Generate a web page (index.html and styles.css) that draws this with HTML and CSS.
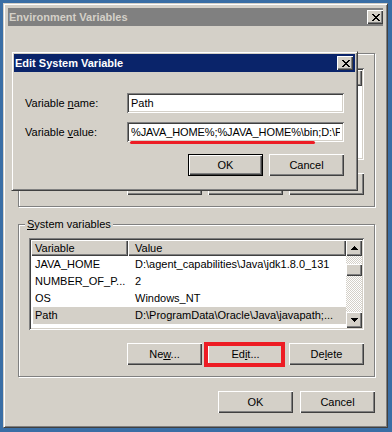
FILE: index.html
```html
<!DOCTYPE html>
<html lang="en">
<head>
    <meta charset="UTF-8">
    <title>Environment Variables</title>
    <link rel="stylesheet" href="styles.css">
</head>
<body>

<div class="window">
    <div class="titlebar inactive">
        <span class="caption">Environment Variables</span>
        <span class="close-btn">
            <svg width="8" height="7" viewBox="0 0 8 7"><path d="M0 0h2v1H0zM6 0h2v1H6zM1 1h2v1H1zM5 1h2v1H5zM2 2h4v1H2zM3 3h2v1H3zM2 4h4v1H2zM1 5h2v1H1zM5 5h2v1H5zM0 6h2v1H0zM6 6h2v1H6z"/></svg>
        </span>
    </div>

    <!-- User variables: covered by the edit dialog, only its edges show -->
    <div class="group user">
        <div class="listview">
            <div class="list-main">
                <div class="list-header"><span class="hd c1"></span><span class="hd c2"></span></div>
            </div>
        </div>
        <div class="button-row">
            <span class="btn"></span>
            <span class="btn"></span>
            <span class="btn"></span>
        </div>
    </div>

    <!-- System variables -->
    <fieldset class="group system">
        <legend><u>S</u>ystem variables</legend>
        <div class="listview">
            <div class="list-main">
                <div class="list-header"><span class="hd c1">Variable</span><span class="hd c2">Value</span></div>
                <div class="row"><span class="c1">JAVA_HOME</span><span class="c2">D:\agent_capabilities\Java\jdk1.8.0_131</span></div>
                <div class="row"><span class="c1">NUMBER_OF_P...</span><span class="c2">2</span></div>
                <div class="row"><span class="c1">OS</span><span class="c2">Windows_NT</span></div>
                <div class="row sel"><span class="c1">Path</span><span class="c2">D:\ProgramData\Oracle\Java\javapath;...</span></div>
            </div>
            <div class="scrollbar">
                <span class="sb-btn">
                    <svg width="7" height="4" viewBox="0 0 7 4"><path d="M3 0h1v1H3zM2 1h3v1H2zM1 2h5v1H1zM0 3h7v1H0z"/></svg>
                </span>
                <span class="sb-thumb"></span>
                <span class="sb-btn down">
                    <svg width="7" height="4" viewBox="0 0 7 4"><path d="M0 0h7v1H0zM1 1h5v1H1zM2 2h3v1H2zM3 3h1v1H3z"/></svg>
                </span>
            </div>
        </div>
        <div class="button-row">
            <button class="btn">Ne<u>w</u>...</button>
            <button class="btn marked">Ed<u>i</u>t...</button>
            <button class="btn">De<u>l</u>ete</button>
        </div>
    </fieldset>

    <div class="footer">
        <button class="btn">OK</button>
        <button class="btn">Cancel</button>
    </div>
</div>

<!-- Edit System Variable dialog, on top of the main window -->
<div class="dialog">
    <div class="titlebar active">
        <span class="caption">Edit System Variable</span>
        <span class="close-btn">
            <svg width="8" height="7" viewBox="0 0 8 7"><path d="M0 0h2v1H0zM6 0h2v1H6zM1 1h2v1H1zM5 1h2v1H5zM2 2h4v1H2zM3 3h2v1H3zM2 4h4v1H2zM1 5h2v1H1zM5 5h2v1H5zM0 6h2v1H0zM6 6h2v1H6z"/></svg>
        </span>
    </div>
    <div class="dialog-body">
        <div class="field">
            <label class="field-label">Variable <u>n</u>ame:</label>
            <input class="textbox" type="text" value="Path">
        </div>
        <div class="field">
            <label class="field-label">Variable <u>v</u>alue:</label>
            <div class="value-wrap">
                <input class="textbox long" type="text" value="%JAVA_HOME%;%JAVA_HOME%\bin;D:\ProgramData\Oracle\Java\javapath;C:\WINDOWS\system32">
                <span class="mark"></span>
            </div>
        </div>
        <div class="dialog-buttons">
            <button class="btn default">OK</button>
            <button class="btn">Cancel</button>
        </div>
    </div>
</div>

</body>
</html>
```

FILE: styles.css
```css
* {
    box-sizing: border-box;
}
body {
    margin: 0;
    background: #3a6ea5;
    font: 11px/13px "Liberation Sans", Arial, sans-serif;
    color: #000;
    overflow: hidden;
}
u {
    text-decoration-thickness: 1px;
    text-underline-offset: 1px;
}

/* window frames */
.window, .dialog {
    background: #d4d0c8;
    border: 1px solid;
    border-color: #d4d0c8 #404040 #404040 #d4d0c8;
    box-shadow: inset 1px 1px #fff, inset -1px -1px #808080;
}
.window {
    margin: 3px 0 0 3px;
    width: 385px;
    height: 425px;
    padding: 4px;
}
.dialog {
    position: absolute;
    left: 11px;
    top: 51px;
    width: 347px;
    height: 140px;
    padding: 2px;
}
.titlebar {
    display: flex;
    align-items: center;
    height: 18px;
    padding-left: 1px;
    font-weight: bold;
}
.titlebar.inactive {
    background: #808080;
    color: #d4d0c8;
}
.titlebar.active {
    background: #0a246a;
    color: #fff;
}
.close-btn {
    margin-left: auto;
    width: 16px;
    height: 14px;
    display: flex;
    align-items: center;
    justify-content: center;
    padding-left: 1px;
    background: #d4d0c8;
    box-shadow: inset 1px 1px #fff, inset -1px -1px #404040, inset -2px -2px #808080;
}
.dialog .close-btn {
    margin-right: 2px;
}
svg {
    display: block;
    fill: #000;
    shape-rendering: crispEdges;
}

/* group boxes */
.group {
    margin: 0 0 0 10px;
    width: 357px;
    min-width: 0;
    padding: 7px 10px 11px 10px;
    border: 1px solid #808080;
    box-shadow: inset 1px 1px #fff, 1px 1px #fff;
}
.group.user {
    margin-top: 27px;
    padding-top: 14px;
}
.group.system {
    margin-top: 11px;
}
.group legend {
    margin-left: -4px;
    padding: 0 2px;
    background: #d4d0c8;
    line-height: 13px;
}

/* list views */
.listview {
    display: flex;
    width: 335px;
    height: 92px;
    padding: 2px;
    background: #fff;
    box-shadow: inset 1px 1px #808080, inset -1px -1px #fff, inset 2px 2px #404040, inset -2px -2px #d4d0c8;
}
.list-main {
    flex: 1;
    min-width: 0;
    overflow: hidden;
}
.list-header {
    display: flex;
    height: 16px;
}
.hd {
    background: #d4d0c8;
    line-height: 16px;
    box-shadow: inset 1px 1px #fff, inset -1px -1px #404040, inset -2px -2px #808080;
}
.hd.c1 {
    width: 97px;
    padding-left: 4px;
}
.hd.c2 {
    flex: 1;
    padding-left: 7px;
}
.row {
    display: flex;
    height: 17px;
    line-height: 17px;
    margin-left: 2px;
    white-space: nowrap;
}
.row.sel {
    background: #d4d0c8;
}
.row .c1 {
    width: 95px;
    padding-left: 2px;
    overflow: hidden;
}
.row .c2 {
    flex: 1;
    padding-left: 7px;
    overflow: hidden;
}
.scrollbar {
    width: 16px;
    display: flex;
    flex-direction: column;
    background: repeating-conic-gradient(#fff 0 25%, #d4d0c8 0 50%) 0 0 / 2px 2px;
}
.sb-btn, .sb-thumb {
    background: #d4d0c8;
    box-shadow: inset 1px 1px #fff, inset -1px -1px #404040, inset -2px -2px #808080;
}
.sb-btn {
    height: 16px;
    display: flex;
    align-items: center;
    justify-content: center;
    padding-bottom: 1px;
}
.sb-btn.down {
    margin-top: auto;
}
.sb-thumb {
    height: 12px;
    margin-top: 8px;
}

/* buttons */
.btn {
    appearance: none;
    display: block;
    width: 75px;
    height: 22px;
    padding: 0;
    border: 0;
    background: #d4d0c8;
    font: inherit;
    color: #000;
    box-shadow: inset 1px 1px #fff, inset -1px -1px #404040, inset -2px -2px #808080;
}
.btn.default {
    box-shadow: inset 0 0 0 1px #000, inset 2px 2px #fff, inset -2px -2px #404040, inset -3px -3px #808080;
}
.btn.marked {
    position: relative;
}
.btn.marked::after {
    content: "";
    position: absolute;
    left: -4px;
    top: -1px;
    right: -2px;
    bottom: -2px;
    border: 4px solid #ed1c24;
}
.button-row {
    display: flex;
    justify-content: flex-end;
    gap: 6px;
    margin-top: 13px;
}
.footer {
    display: flex;
    justify-content: flex-end;
    gap: 7px;
    width: 357px;
    margin: 14px 0 0 10px;
}

/* edit dialog body */
.dialog-body {
    padding: 21px 11px 0 11px;
}
.field {
    display: flex;
    align-items: center;
    height: 20px;
}
.field + .field {
    margin-top: 9px;
}
.field-label {
    width: 102px;
}
.textbox {
    width: 217px;
    height: 20px;
    padding: 0 4px;
    border: 0;
    outline: none;
    background: #fff;
    font: inherit;
    color: #000;
    box-shadow: inset 1px 1px #808080, inset -1px -1px #fff, inset 2px 2px #404040, inset -2px -2px #d4d0c8;
}
.textbox.long {
    letter-spacing: -0.1px;
}
.value-wrap {
    position: relative;
    height: 20px;
}
.mark {
    position: absolute;
    left: 3px;
    top: 19px;
    width: 185px;
    height: 3px;
    border-radius: 2px;
    background: #ed1c24;
}
.dialog-buttons {
    display: flex;
    justify-content: flex-end;
    gap: 6px;
    margin-top: 12px;
}
```
